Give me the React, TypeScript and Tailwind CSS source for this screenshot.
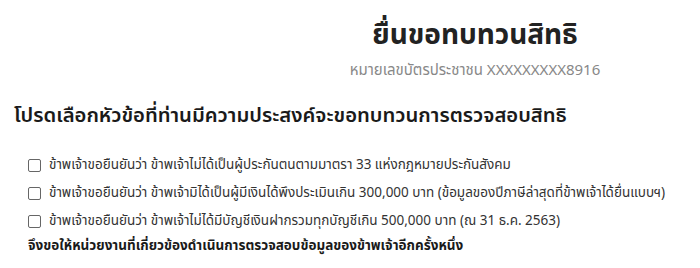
const items = [
  'ข้าพเจ้าขอยืนยันว่า ข้าพเจ้าไม่ได้เป็นผู้ประกันตนตามมาตรา 33 แห่งกฎหมายประกันสังคม',
  'ข้าพเจ้าขอยืนยันว่า ข้าพเจ้ามิได้เป็นผู้มีเงินได้พึงประเมินเกิน 300,000 บาท (ข้อมูลของปีภาษีล่าสุดที่ข้าพเจ้าได้ยื่นแบบฯ)',
  'ข้าพเจ้าขอยืนยันว่า ข้าพเจ้าไม่ได้มีบัญชีเงินฝากรวมทุกบัญชีเกิน 500,000 บาท (ณ 31 ธ.ค. 2563)',
];

export default function App() {
  return (
    <div className="w-[700px] h-[268px] bg-white overflow-hidden text-[#1a1a1a] font-['Noto_Sans_Thai','Noto_Sans',sans-serif]">
      <div className="flex">
        <div className="w-[250px]" />
        <div className="flex-1 flex flex-col items-center pt-[19px]">
          <h1 className="text-[28px] leading-[34px] font-bold text-[#222]">ยื่นขอทบทวนสิทธิ</h1>
          <p className="mt-[8px] text-[15px] leading-[20px] text-[#888]">หมายเลขบัตรประชาชน XXXXXXXXX8916</p>
        </div>
      </div>
      <div className="px-[14px] mt-[21px]">
        <h2 className="text-[20.25px] leading-[28px] font-semibold text-[#1a1a1a]">
          โปรดเลือกหัวข้อที่ท่านมีความประสงค์จะขอทบทวนการตรวจสอบสิทธิ
        </h2>
        <div className="pl-[14px] mt-[21px] flex flex-col">
          {items.map(t => (
            <label key={t} className="flex items-center gap-[8px] h-[28px] text-[13.5px] text-[#333] whitespace-nowrap">
              <span className="w-[13px] h-[13px] border-[1.5px] border-[#666] rounded-[2px] shrink-0" />
              <span>{t}</span>
            </label>
          ))}
          <p className="text-[13.5px] leading-[22px] font-bold text-[#1a1a1a] whitespace-nowrap">
            จึงขอให้หน่วยงานที่เกี่ยวข้องดำเนินการตรวจสอบข้อมูลของข้าพเจ้าอีกครั้งหนึ่ง
          </p>
        </div>
      </div>
    </div>
  );
}
